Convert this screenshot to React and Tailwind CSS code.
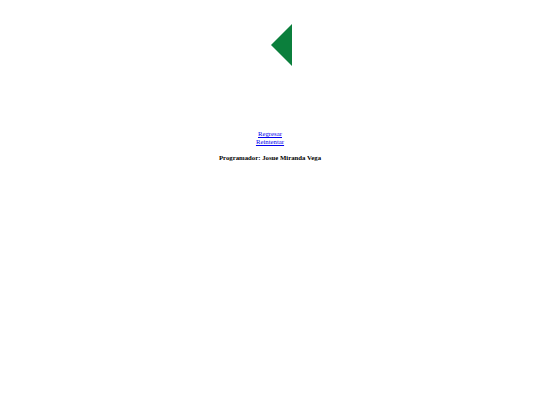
export default function App() {
  return (
    <div className="min-h-[405px] w-full bg-white flex flex-col items-center text-black" style={{ fontFamily: '"Liberation Serif", "Times New Roman", serif' }}>
      <svg className="mt-[24px] ml-[22px]" width="21" height="42" viewBox="0 0 21 42">
        <polygon points="21,0 21,42 0,21" fill="#0b7f3c" />
      </svg>
      <div className="mt-[64px] flex flex-col items-center text-[6.75px] leading-[8px]">
        <a href="#" className="text-[#0000ee] underline">Regresar</a>
        <a href="#" className="text-[#0000ee] underline">Reintentar</a>
        <p className="mt-[8px] font-bold">Programador: Josue Miranda Vega</p>
      </div>
    </div>
  );
}
